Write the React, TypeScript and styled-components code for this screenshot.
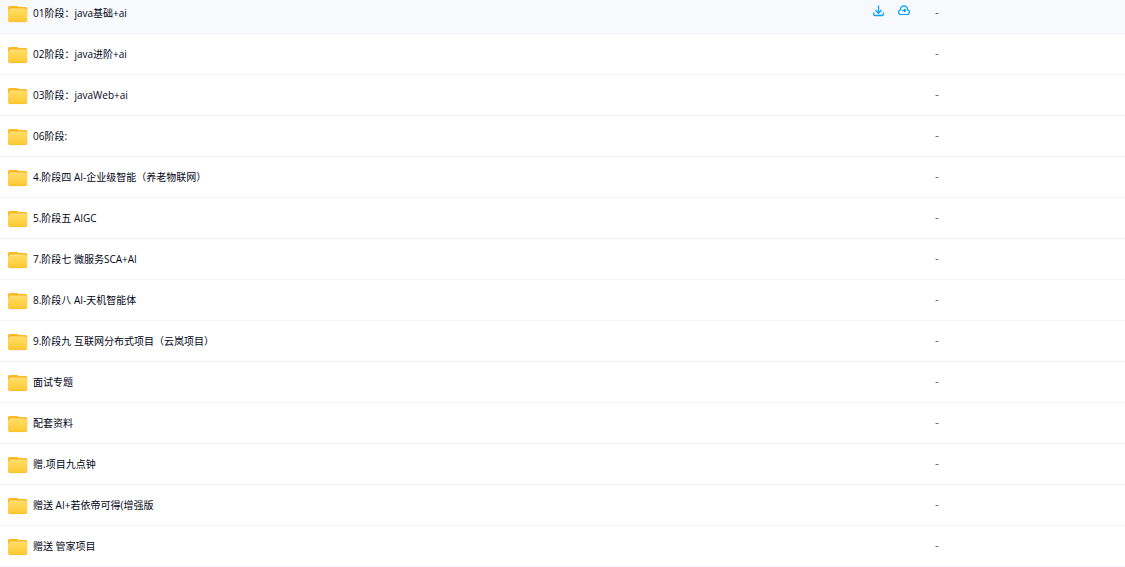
import React from "react";
import styled, { createGlobalStyle } from "styled-components";

const GlobalStyle = createGlobalStyle`
  * { box-sizing: border-box; }
  body {
    margin: 0;
    background: #fff;
    color: #03081a;
    font-family: "Open Sans", "Noto Sans CJK SC", sans-serif;
    font-size: 10px;
    line-height: 16px;
  }
`;

const FileTable = styled.table`
  width: 100%;
  table-layout: fixed;
  border-collapse: separate;
  border-spacing: 0;
`;

const ActionsCol = styled.col`
  width: 62px;
`;

const SizeCol = styled.col`
  width: 190px;
`;

const Cell = styled.td`
  height: 41px;
  padding: 0;
  border-bottom: 1px solid #f1f5fb;
  vertical-align: middle;
`;

const Row = styled.tr<{ $active: boolean }>`
  background: ${(p) => (p.$active ? "#f7f9fc" : "#fff")};

  &:first-child > ${Cell} {
    height: 34px;
    padding-bottom: 7px;
  }
`;

const FileLink = styled.a`
  display: flex;
  align-items: center;
  gap: 5px;
  padding-left: 8px;
  color: #000314;
  text-decoration: none;
  white-space: nowrap;
`;

const Actions = styled.div`
  display: flex;
  gap: 13px;
  padding-bottom: 5px;
`;

const IconButton = styled.button`
  display: flex;
  padding: 0;
  border: 0;
  background: none;
  color: #06a0ff;
  cursor: pointer;
`;

const Size = styled.span`
  display: block;
  color: #66707c;
  font-size: 12px;
`;

const FolderIcon = () => (
  <svg width="20" height="20" viewBox="0 -2 20 20" aria-hidden="true">
    <defs>
      <linearGradient id="folderFront" x1="0" y1="0" x2="0" y2="1">
        <stop offset="0" stopColor="#ffdc62" />
        <stop offset="1" stopColor="#ffc933" />
      </linearGradient>
    </defs>
    <path d="M0 2.5Q0 1 1.6 1H9Q10 1 10.6 2H17.4Q19.2 2 19.2 4V9H0Z" fill="#fdb81e" />
    <path d="M1 5.5Q1 3.5 3 3.5H16.5Q18.5 3.5 18.5 5.5V9H1Z" fill="#ffe08a" />
    <path d="M0 6.6Q0 5 1.7 5H7.2Q8.4 5 9 4.2H17.3Q19.2 4.2 19.2 6V15Q19.2 17 17.3 17H2Q0 17 0 15Z" fill="url(#folderFront)" />
    <path d="M.4 15.5Q.8 16.6 2 16.6H17.3Q18.6 16.6 18.9 15.5" fill="none" stroke="#fbb92a" strokeWidth=".8" />
  </svg>
);

const DownloadIcon = () => (
  <svg width="12" height="12" viewBox="0 0 12 12" fill="none" stroke="currentColor" strokeWidth="1.3" strokeLinecap="round" strokeLinejoin="round" aria-hidden="true">
    <path d="M5.5 .8V8M2.8 5.5L5.5 8.2L8.2 5.5M.7 7.8V9.3Q.7 10.5 1.9 10.5H9.1Q10.3 10.5 10.3 9.3V7.8" />
  </svg>
);

const CloudSaveIcon = () => (
  <svg width="12" height="12" viewBox="0 0 12 12" fill="none" stroke="currentColor" strokeWidth="1.2" strokeLinecap="round" strokeLinejoin="round" aria-hidden="true">
    <path d="M3 9.5Q.6 9.3.6 7.2Q.6 5.5 2.4 4.9Q2.7 .8 6 .8Q9.3 .8 9.6 4.9Q11.4 5.5 11.4 7.2Q11.4 9.3 9 9.5Z" />
    <path d="M4.4 5.5H7.6M6.4 4.3L7.7 5.5L6.4 6.7" />
  </svg>
);

const files = [
  "01阶段：java基础+ai",
  "02阶段：java进阶+ai",
  "03阶段：javaWeb+ai",
  "06阶段:",
  "4.阶段四 AI-企业级智能（养老物联网）",
  "5.阶段五 AIGC",
  "7.阶段七 微服务SCA+AI",
  "8.阶段八 AI-天机智能体",
  "9.阶段九 互联网分布式项目（云岚项目）",
  "面试专题",
  "配套资料",
  "赠.项目九点钟",
  "赠送 AI+若依帝可得(增强版",
  "赠送 管家项目",
];

export default function App() {
  const activeIndex = 0;
  return (
    <>
      <GlobalStyle />
      <FileTable>
        <colgroup>
          <col />
          <ActionsCol />
          <SizeCol />
        </colgroup>
        <tbody>
          {files.map((name, i) => (
            <Row key={name} $active={i === activeIndex}>
              <Cell>
                <FileLink href="#">
                  <FolderIcon />
                  {name}
                </FileLink>
              </Cell>
              <Cell>
                {i === activeIndex && (
                  <Actions>
                    <IconButton type="button" aria-label="下载">
                      <DownloadIcon />
                    </IconButton>
                    <IconButton type="button" aria-label="保存到网盘">
                      <CloudSaveIcon />
                    </IconButton>
                  </Actions>
                )}
              </Cell>
              <Cell>
                <Size>-</Size>
              </Cell>
            </Row>
          ))}
        </tbody>
      </FileTable>
    </>
  );
}
